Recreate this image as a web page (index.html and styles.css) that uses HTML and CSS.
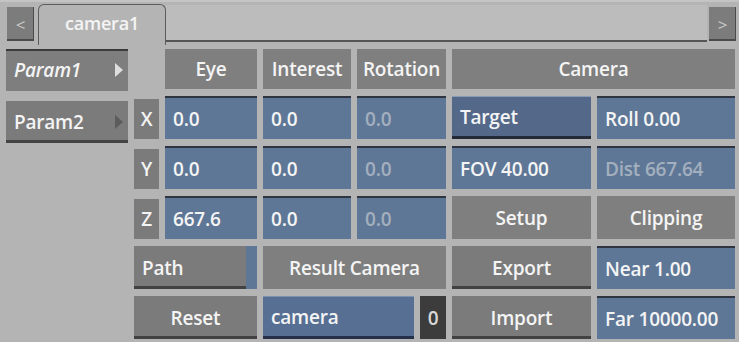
FILE: index.html
```html
<!DOCTYPE html>
<html lang="en">
<head>
  <meta charset="UTF-8">
  <title>camera1</title>
  <link rel="stylesheet" href="styles.css">
</head>
<body>
  <div class="tabbar">
    <div class="arrow">&lt;</div>
    <div class="tab">camera1</div>
    <div class="strip"></div>
    <div class="arrow">&gt;</div>
  </div>

  <div class="main">
    <div class="side">
      <div class="param pressed"><i>Param1</i><span class="tri"></span></div>
      <div class="param"><span>Param2</span><span class="tri"></span></div>
    </div>

    <div class="grid">
      <div></div>
      <div class="head">Eye</div>
      <div class="head">Interest</div>
      <div class="head">Rotation</div>
      <div class="head span2">Camera</div>

      <div class="axis">X</div>
      <div class="field">0.0</div>
      <div class="field">0.0</div>
      <div class="field off">0.0</div>
      <div class="bluebtn">Target</div>
      <div class="field">Roll 0.00</div>

      <div class="axis">Y</div>
      <div class="field">0.0</div>
      <div class="field">0.0</div>
      <div class="field off">0.0</div>
      <div class="field">FOV 40.00</div>
      <div class="field off">Dist 667.64</div>

      <div class="axis">Z</div>
      <div class="field">667.6</div>
      <div class="field">0.0</div>
      <div class="field off">0.0</div>
      <div class="head">Setup</div>
      <div class="head">Clipping</div>

      <div class="btn span2 path"><span>Path</span><span class="flag"></span></div>
      <div class="head span2">Result Camera</div>
      <div class="btn center">Export</div>
      <div class="field">Near 1.00</div>

      <div class="btn span2 center">Reset</div>
      <div class="pick span2">
        <div class="name">camera</div>
        <div class="num">0</div>
      </div>
      <div class="btn center">Import</div>
      <div class="field">Far 10000.00</div>
    </div>
  </div>
</body>
</html>
```

FILE: styles.css
```css
body {
  margin: 0;
  width: 739px;
  height: 342px;
  overflow: hidden;
  background: #b4b4b4;
  font-family: "Open Sans", "DejaVu Sans", sans-serif;
  font-weight: 600;
  font-size: 19px;
  letter-spacing: -0.2px;
  color: #f4f4f4;
}
.tabbar {
  display: flex;
  align-items: flex-start;
  height: 45px;
  padding: 0 3px 0 7px;
  border-top: 2px solid #c4c4c4;
  box-sizing: border-box;
}
.arrow {
  width: 27px;
  height: 34px;
  margin-top: 5px;
  background: #7c7c7c;
  color: #c8c8c8;
  font-weight: 400;
  font-size: 17px;
  display: flex;
  align-items: center;
  justify-content: center;
  box-shadow: inset -1px -2px 0 #4a4a4a;
}
.tab {
  width: 128px;
  height: 41px;
  margin: 2px 0 0 4px;
  border: 1px solid #5c5c5c;
  border-bottom: none;
  border-radius: 6px 6px 0 0;
  background: #b4b4b4;
  display: flex;
  align-items: center;
  justify-content: center;
  padding-bottom: 4px;
  box-sizing: border-box;
  font-size: 18px;
}
.strip {
  flex: 1;
  height: 37px;
  margin: 3px 2px 0 0;
  background: #bcbcbc;
  border-bottom: 2px solid #555;
  box-sizing: border-box;
}
.main {
  display: flex;
  padding: 4px 0 0 6px;
}
.side {
  width: 122px;
  display: flex;
  flex-direction: column;
  gap: 10px;
}
.param {
  height: 42px;
  background: #7b7b7b;
  display: flex;
  align-items: center;
  justify-content: space-between;
  padding: 0 5px 0 8px;
  box-sizing: border-box;
  box-shadow: inset 0 -3px 0 #444;
}
.param.pressed {
  box-shadow: inset 0 2px 0 #3a3a3a;
  background: #7e7e7e;
}
.param i {
  font-weight: 600;
}
.tri {
  width: 0;
  height: 0;
  border-top: 7px solid transparent;
  border-bottom: 7px solid transparent;
  border-left: 8px solid #5c5c5c;
}
.pressed .tri {
  border-left-color: #dedede;
}
.grid {
  margin-left: 6px;
  display: grid;
  grid-template-columns: 25px 92px 88px 89px 139px 138px;
  grid-template-rows: 40px repeat(5, 43px);
  column-gap: 6px;
  row-gap: 7px;
}
.grid > div {
  display: flex;
  align-items: center;
  box-sizing: border-box;
}
.span2 {
  grid-column: span 2;
}
.head {
  background: #7f7f7f;
  justify-content: center;
}
.axis {
  background: #7b7b7b;
  justify-content: center;
  margin-top: 3px;
}
.field {
  background: #5e7796;
  border-top: 2px solid #2e3440;
  padding-left: 8px;
}
.field.off {
  color: #a3afbe;
}
.bluebtn {
  background: #54698a;
  border-top: 1px solid #8a9bb3;
  border-bottom: 3px solid #222a38;
  padding-left: 8px;
}
.btn {
  background: #7b7b7b;
  box-shadow: inset 0 -3px 0 #424242;
  padding-left: 8px;
}
.btn.center {
  justify-content: center;
  padding-left: 0;
}
.path {
  justify-content: space-between;
  padding-right: 0;
}
.flag {
  width: 11px;
  align-self: stretch;
  background: #5e7796;
}
.pick {
  gap: 6px;
}
.name {
  flex: 1;
  height: 100%;
  display: flex;
  align-items: center;
  padding-left: 8px;
  box-sizing: border-box;
  background: #566f93;
  border-top: 1px solid #7d90ad;
  border-bottom: 3px solid #26304a;
}
.num {
  width: 26px;
  height: 100%;
  background: #3c3c3c;
  color: #d8d8d8;
  display: flex;
  align-items: center;
  justify-content: center;
}
```
